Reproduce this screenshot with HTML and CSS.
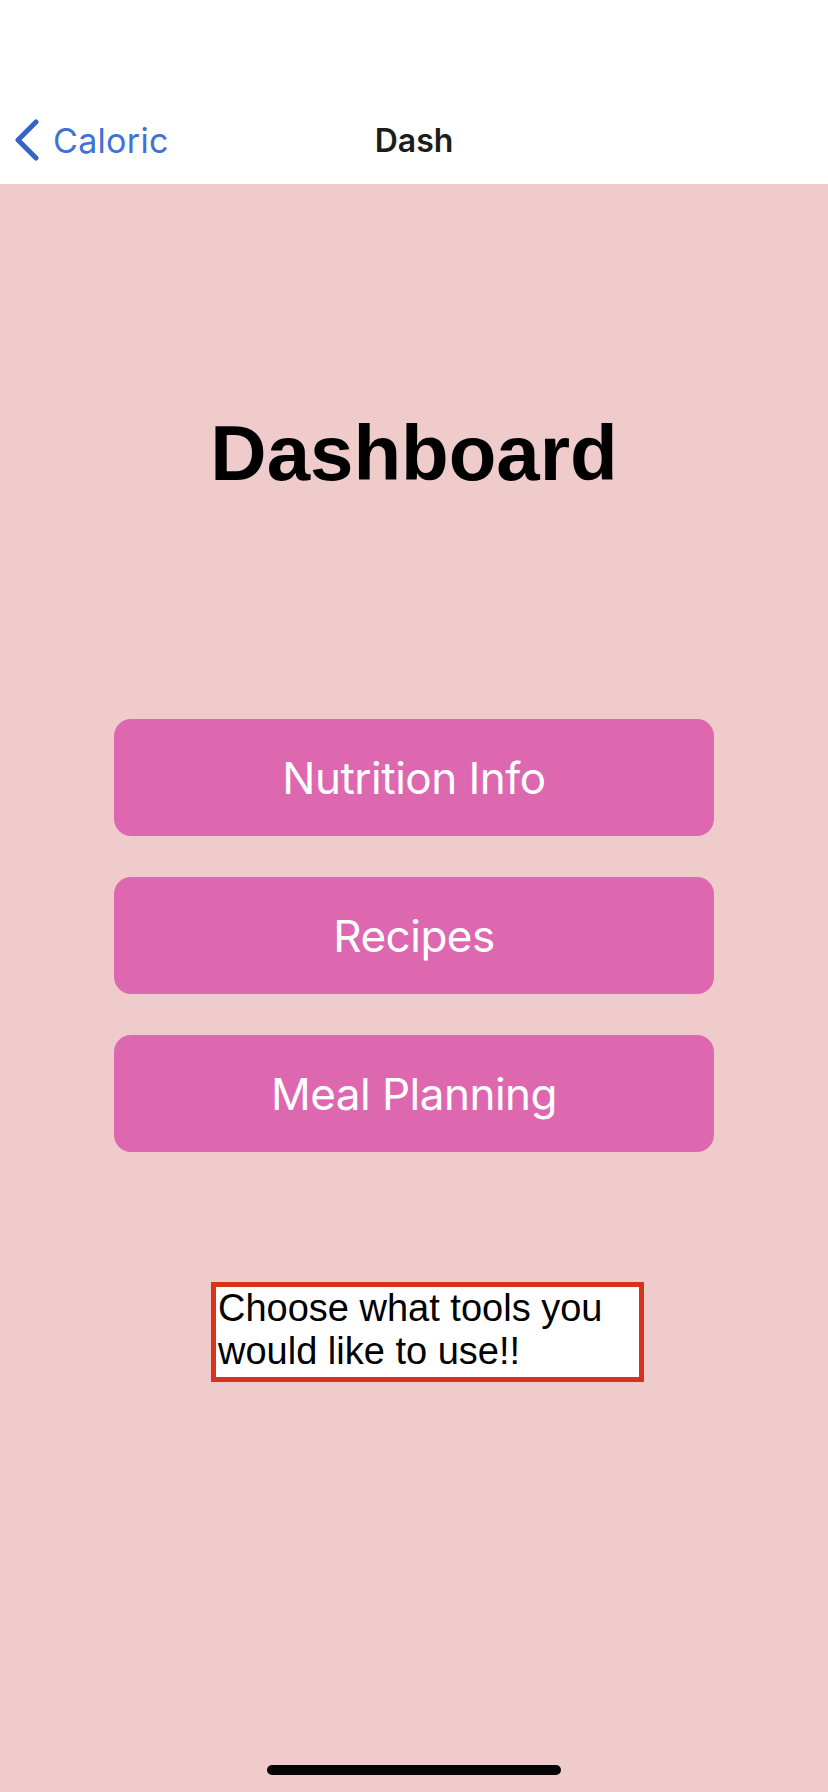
FILE: index.html
```html
<!DOCTYPE html>
<html>
<head>
<meta charset="utf-8">
<link rel="stylesheet" href="styles.css">
</head>
<body>
<div class="screen">
  <header class="nav">
    <div class="nav-row">
      <a class="back">
        <svg class="chev" width="26" height="42" viewBox="0 0 26 42"><polyline points="22,3 4,21 22,39" fill="none" stroke="#3563c9" stroke-width="5" stroke-linecap="round" stroke-linejoin="round"/></svg>
        <span class="back-label">Caloric</span>
      </a>
      <div class="nav-title">Dash</div>
      <div></div>
    </div>
  </header>
  <main class="content">
    <h1 class="title">Dashboard</h1>
    <div class="buttons">
      <div class="btn">Nutrition Info</div>
      <div class="btn">Recipes</div>
      <div class="btn">Meal Planning</div>
    </div>
    <div class="note">Choose what tools you would like to use!!</div>
  </main>
  <div class="home-indicator"></div>
</div>
</body>
</html>
```
FILE: styles.css
```css
html, body {
  margin: 0;
  padding: 0;
}
body {
  width: 828px;
  height: 1792px;
  overflow: hidden;
  background: #f0cbcb;
}
.screen {
  position: relative;
  width: 828px;
  height: 1792px;
  display: flex;
  flex-direction: column;
}
.nav {
  background: #ffffff;
  height: 184px;
  padding-top: 96px;
  box-sizing: border-box;
}
.nav-row {
  height: 88px;
  display: grid;
  grid-template-columns: 1fr auto 1fr;
  align-items: center;
}
.back {
  display: flex;
  align-items: center;
  padding-left: 14px;
  gap: 13px;
  color: #3f72d6;
  font-family: Inter, "Noto Sans", sans-serif;
  font-size: 34px;
  letter-spacing: 0.3px;
}
.chev {
  display: block;
}
.nav-title {
  font-family: Inter, "Noto Sans", sans-serif;
  font-weight: 600;
  font-size: 32px;
  color: #1c1c1c;
}
.content {
  flex: 1;
  display: flex;
  flex-direction: column;
  align-items: center;
}
.title {
  margin: 229px 0 0 0;
  font-family: "Liberation Sans", Arial, sans-serif;
  font-weight: 700;
  font-size: 78px;
  line-height: 80px;
  color: #000;
}
.buttons {
  margin-top: 226px;
  display: flex;
  flex-direction: column;
  gap: 41px;
}
.btn {
  width: 600px;
  height: 117px;
  border-radius: 17px;
  background: #de68af;
  color: #ffffff;
  display: flex;
  align-items: center;
  justify-content: center;
  font-family: Inter, "Noto Sans", sans-serif;
  font-size: 44px;
  font-weight: 400;
  letter-spacing: -0.5px;
}
.note {
  margin-top: 130px;
  align-self: flex-start;
  margin-left: 211px;
  width: 433px;
  box-sizing: border-box;
  border: 5px solid #d7331c;
  background: #ffffff;
  padding: 0 3px 4px 2px;
  font-family: "Liberation Sans", Arial, sans-serif;
  font-size: 38px;
  color: #000;
}
.home-indicator {
  position: absolute;
  left: 267px;
  bottom: 17px;
  width: 294px;
  height: 10px;
  border-radius: 5px;
  background: #050505;
}
```
